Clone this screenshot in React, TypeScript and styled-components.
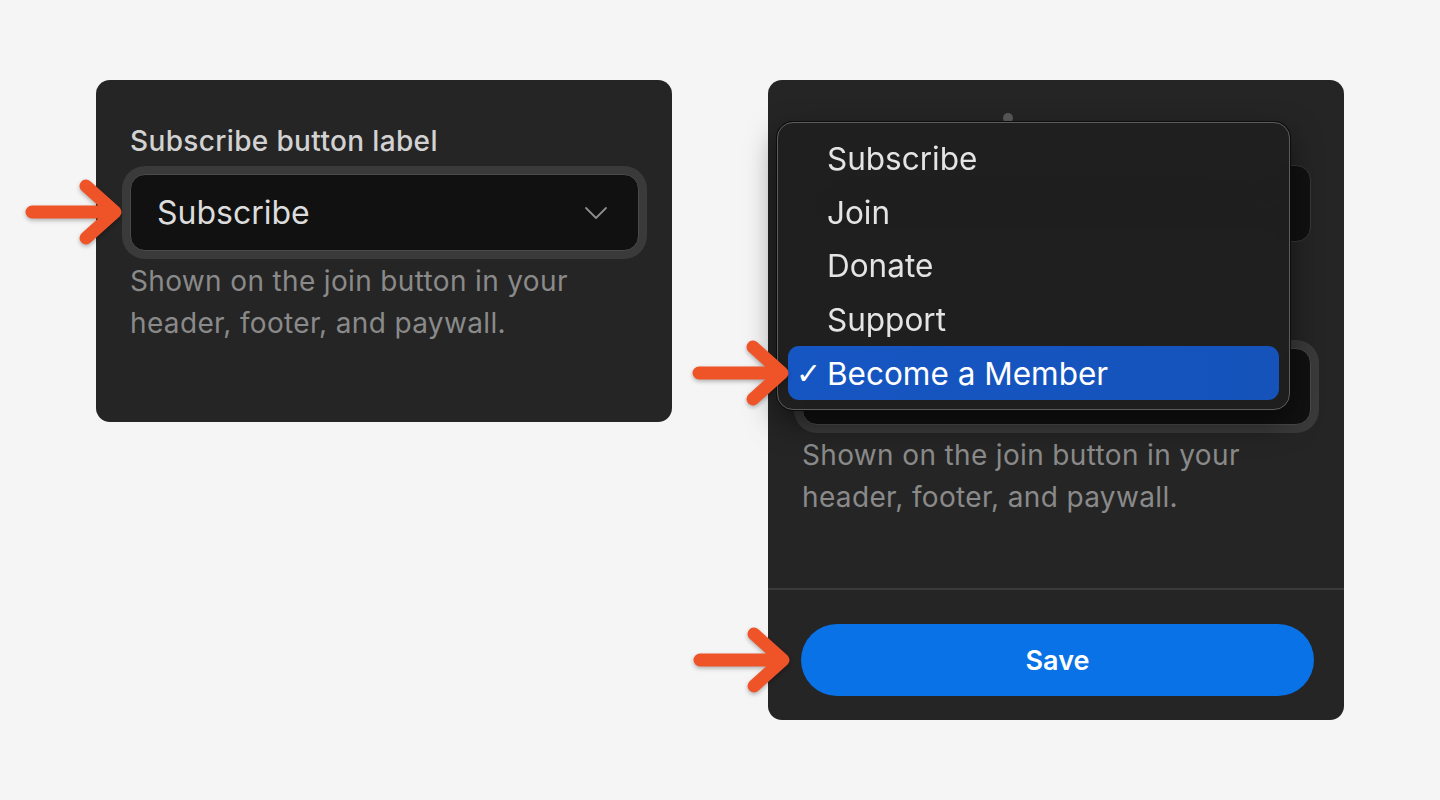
import React from 'react'
import styled, { createGlobalStyle } from 'styled-components'

const GlobalStyle = createGlobalStyle`
    html, body {
        margin: 0;
        padding: 0;
        background: #f5f5f5;
        font-family: Inter, "Noto Sans", "Liberation Sans", sans-serif;
    }
`

const Page = styled.div`
    display: flex;
    flex-direction: row;
    align-items: flex-start;
    gap: 96px;
    padding: 80px 0 0 96px;
    width: 1440px;
    height: 800px;
    box-sizing: border-box;
`

const Card = styled.div<{ $height: number }>`
    position: relative;
    display: flex;
    flex-direction: column;
    width: 576px;
    height: ${p => p.$height}px;
    background: #252525;
    border-radius: 14px;
    box-sizing: border-box;
`

const CardBody = styled.div`
    position: relative;
    flex: 1;
    display: flex;
    flex-direction: column;
    padding: 44px 33px 0 34px;
`

const Field = styled.div<{ $gap: number }>`
    display: flex;
    flex-direction: column;
    margin-bottom: ${p => p.$gap}px;
`

const Label = styled.label<{ $space: number }>`
    font-size: 28px;
    line-height: 34px;
    font-weight: 500;
    letter-spacing: 0.35px;
    color: #d2d2d2;
    margin-bottom: ${p => p.$space}px;
`

const SelectWrap = styled.div`
    position: relative;
`

const SelectBox = styled.div<{ $focused?: boolean }>`
    display: flex;
    align-items: center;
    justify-content: space-between;
    height: 77px;
    padding: 0 30px 0 26px;
    background: #111111;
    border: 1px solid ${p => (p.$focused ? '#4a4a4a' : '#383838')};
    border-radius: 15px;
    box-sizing: border-box;
    box-shadow: ${p => (p.$focused ? '0 0 0 8px #3a3a3a' : 'none')};
    font-size: 32px;
    color: #dcdcdc;
`

const Hint = styled.p<{ $top: number }>`
    margin: ${p => p.$top}px 0 0;
    font-size: 28px;
    line-height: 42px;
    letter-spacing: 0.35px;
    color: #8a8a8a;
`

const Footer = styled.div`
    display: flex;
    padding: 34px 30px 24px 33px;
    border-top: 2px solid #3a3a3a;
`

const SaveButton = styled.button`
    flex: 1;
    height: 72px;
    border: none;
    border-radius: 36px;
    background: #0872e6;
    color: #ffffff;
    font-family: Inter, "Noto Sans", sans-serif;
    font-size: 27px;
    font-weight: 600;
    position: relative;
`

const Menu = styled.div`
    position: absolute;
    left: 9px;
    top: 42px;
    width: 513px;
    height: 288px;
    padding: 9px 10px;
    box-sizing: border-box;
    display: flex;
    flex-direction: column;
    background: rgba(31, 31, 31, 0.96);
    backdrop-filter: blur(24px);
    border: 1px solid #5c5c5c;
    border-radius: 16px;
    box-shadow: 0 0 0 1px #0d0d0d, 0 12px 30px rgba(0, 0, 0, 0.5);
`

const MenuItem = styled.div<{ $selected?: boolean }>`
    position: relative;
    display: flex;
    align-items: center;
    height: 54px;
    padding-left: 39px;
    border-radius: 11px;
    font-family: Inter, "Noto Sans", sans-serif;
    font-size: 31.5px;
    color: ${p => (p.$selected ? '#ffffff' : '#e4e4e4')};
    background: ${p => (p.$selected ? 'linear-gradient(90deg, #1656c2, #1553bb)' : 'transparent')};
`

const Check = styled.span`
    position: absolute;
    left: 8px;
    top: 50%;
    transform: translateY(-50%);
    font-family: "DejaVu Sans", sans-serif;
    font-size: 30px;
    font-weight: bold;
    color: #ffffff;
`

const Knob = styled.span`
    position: absolute;
    left: 235px;
    top: 33px;
    width: 10px;
    height: 10px;
    border-radius: 50%;
    background: #5a5a5a;
`

const ArrowMark = styled.svg<{ $left: number; $top: number }>`
    position: absolute;
    left: ${p => p.$left}px;
    top: ${p => p.$top}px;
    width: 100px;
    height: 64px;
    overflow: visible;
    filter: drop-shadow(0 2px 2px rgba(0, 0, 0, 0.28));
    z-index: 5;
`

function Arrow({ left, top }: { left: number; top: number }) {
    return (
        <ArrowMark $left={left} $top={top} viewBox="0 0 100 64">
            <path d="M10 32 H92 M64 6 L93 32 L64 58"
                  fill="none" stroke="#ef5428" strokeWidth="13"
                  strokeLinecap="round" strokeLinejoin="round" />
        </ArrowMark>
    )
}

function Chevron() {
    return (
        <svg width="24" height="14" viewBox="0 0 24 14">
            <path d="M2 2 L12 12 L22 2" fill="none" stroke="#8c8c8c" strokeWidth="1.8" strokeLinecap="round" strokeLinejoin="round" />
        </svg>
    )
}

const options = ['Subscribe', 'Join', 'Donate', 'Support', 'Become a Member']

function App() {
    return (
        <>
            <GlobalStyle />
            <Page>
                <Card $height={342}>
                    <CardBody>
                        <Field $gap={0}>
                            <Label $space={16}>Subscribe button label</Label>
                            <SelectWrap>
                                <Arrow left={-108} top={6} />
                                <SelectBox $focused>
                                    <span>Subscribe</span>
                                    <Chevron />
                                </SelectBox>
                            </SelectWrap>
                            <Hint $top={9}>
                                Shown on the join button in your header, footer, and paywall.
                            </Hint>
                        </Field>
                    </CardBody>
                </Card>

                <Card $height={640}>
                    <CardBody>
                        <Knob />
                        {/* fields under the open menu */}
                        <Field $gap={56}>
                            <Label $space={7}>&nbsp;</Label>
                            <SelectBox>
                                <span />
                                <Chevron />
                            </SelectBox>
                        </Field>
                        <Field $gap={0}>
                            <Label $space={16}>&nbsp;</Label>
                            <SelectBox $focused>
                                <span />
                                <Chevron />
                            </SelectBox>
                            <Hint $top={9}>
                                Shown on the join button in your header, footer, and paywall.
                            </Hint>
                        </Field>
                        <Menu>
                            {options.map(o => (
                                <MenuItem key={o} $selected={o === 'Become a Member'}>
                                    {o === 'Become a Member' && (
                                        <>
                                            <Arrow left={-99} top={-5} />
                                            <Check>✓</Check>
                                        </>
                                    )}
                                    {o}
                                </MenuItem>
                            ))}
                        </Menu>
                    </CardBody>
                    <Footer>
                        <SaveButton>
                            <Arrow left={-111} top={4} />
                            Save
                        </SaveButton>
                    </Footer>
                </Card>
            </Page>
        </>
    )
}

export default App
